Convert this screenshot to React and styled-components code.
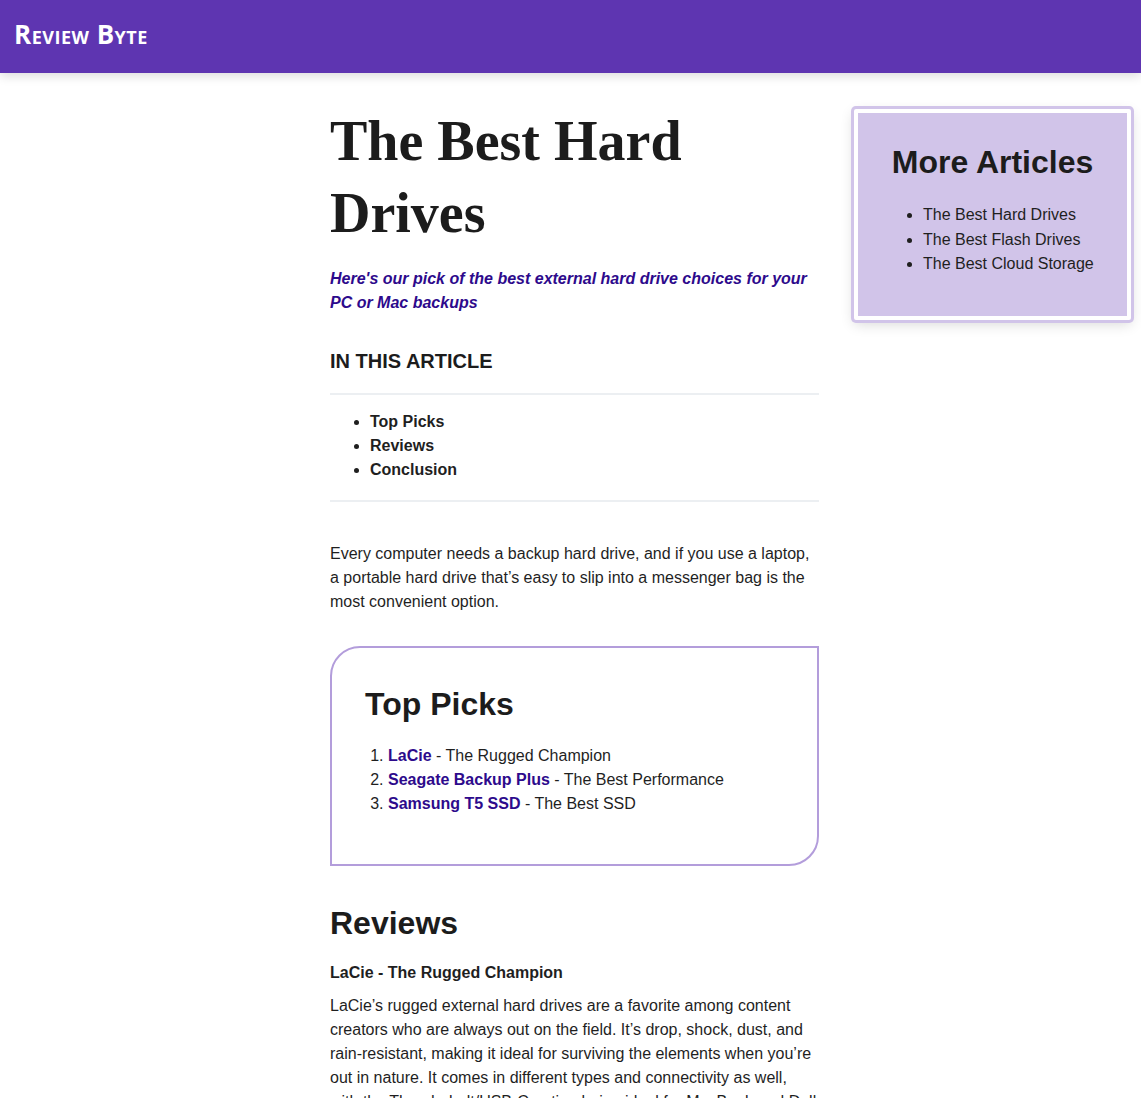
import React from "react";
import styled, { createGlobalStyle } from "styled-components";

const GlobalStyle = createGlobalStyle`
  * { box-sizing: border-box; }
  body {
    margin: 0;
    background: #fff;
    color: #1f1f1f;
    font-family: "Liberation Sans", Arial, sans-serif;
    font-size: 16px;
    line-height: 24px;
  }
`;

const tocItems = ["Top Picks", "Reviews", "Conclusion"];

const picks = [
  { name: "LaCie", tag: "The Rugged Champion" },
  { name: "Seagate Backup Plus", tag: "The Best Performance" },
  { name: "Samsung T5 SSD", tag: "The Best SSD" },
];

const moreArticles = [
  "The Best Hard Drives",
  "The Best Flash Drives",
  "The Best Cloud Storage",
];

function App() {
  return (
    <>
      <GlobalStyle />
      <Header>
        <Logo>Review Byte</Logo>
      </Header>
      <Layout>
        <Article>
          <Title>The Best Hard Drives</Title>
          <Subtitle>
            Here's our pick of the best external hard drive choices for your
            PC or Mac backups
          </Subtitle>

          <TocHeading>IN THIS ARTICLE</TocHeading>
          <Toc>
            <ul>
              {tocItems.map((item) => (
                <li key={item}>{item}</li>
              ))}
            </ul>
          </Toc>

          <Intro>
            Every computer needs a backup hard drive, and if you use a laptop,
            a portable hard drive that’s easy to slip into a messenger bag is
            the most convenient option.
          </Intro>

          <PicksBox>
            <SectionTitle $gap={21}>Top Picks</SectionTitle>
            <PickList>
              {picks.map((p) => (
                <li key={p.name}>
                  <PickLink href="#">{p.name}</PickLink> - {p.tag}
                </li>
              ))}
            </PickList>
          </PicksBox>

          <SectionTitle $gap={19}>Reviews</SectionTitle>
          <ReviewTitle>LaCie - The Rugged Champion</ReviewTitle>
          <Body>
            LaCie’s rugged external hard drives are a favorite among content
            creators who are always out on the field. It’s drop, shock, dust,
            and rain-resistant, making it ideal for surviving the elements
            when you’re out in nature. It comes in different types and
            connectivity as well, with the Thunderbolt/USB-C option being ideal
            for MacBook and Dell XPS users who need fast transfers.
          </Body>
        </Article>

        <Aside>
          <AsideTitle>More Articles</AsideTitle>
          <AsideList>
            {moreArticles.map((a) => (
              <li key={a}>{a}</li>
            ))}
          </AsideList>
        </Aside>
      </Layout>
    </>
  );
}

export default App;

const Header = styled.header`
  height: 73px;
  background: #5e35b1;
  display: flex;
  align-items: center;
  padding: 0 14px;
  box-shadow: 0 3px 10px rgba(0, 0, 0, 0.14);
  position: relative;
  z-index: 1;
`;

const Logo = styled.div`
  color: #fff;
  font-family: "Open Sans", "DejaVu Sans", sans-serif;
  font-variant: small-caps;
  font-weight: 700;
  font-size: 26px;
  letter-spacing: 0.5px;
  margin-top: -5px;
`;

const Layout = styled.div`
  display: grid;
  grid-template-columns: 1fr 489px 1fr;
  align-items: start;
  padding-left: 8px;
`;

const Article = styled.main`
  grid-column: 2;
  padding-top: 32px;
  padding-bottom: 40px;
`;

const Title = styled.h1`
  margin: 0 0 18px;
  font-family: "Liberation Serif", "Times New Roman", serif;
  font-weight: 700;
  font-size: 56px;
  line-height: 72px;
  color: #1c1c1c;
  width: 400px;
`;

const Subtitle = styled.p`
  margin: 0 0 35px;
  color: #2d0a8c;
  font-weight: 700;
  font-style: italic;
`;

const TocHeading = styled.h4`
  margin: 0 0 20px;
  font-size: 20px;
  line-height: 23px;
  font-weight: 700;
  color: #1c1c1c;
`;

const Toc = styled.nav`
  border-top: 2px solid #eceff2;
  border-bottom: 2px solid #eceff2;
  padding: 15px 0 18px;
  font-weight: 700;

  ul {
    margin: 0;
    padding-left: 40px;
  }
`;

const Intro = styled.p`
  margin: 40px 0 32px;
`;

const PicksBox = styled.section`
  border: 2px solid #b39ddb;
  border-radius: 30px 0 30px 0;
  padding: 38px 33px 48px;
  margin-bottom: 39px;
`;

const SectionTitle = styled.h2`
  margin: 0 0 ${(p) => p.$gap || 20}px;
  font-size: 32px;
  line-height: 37px;
  font-weight: 700;
  color: #1c1c1c;
`;

const PickList = styled.ol`
  margin: 0;
  padding-left: 23px;
`;

const PickLink = styled.a`
  color: #2d0a8c;
  font-weight: 700;
  text-decoration: none;
`;

const ReviewTitle = styled.h3`
  margin: 0 0 9px;
  font-size: 16px;
  line-height: 24px;
  font-weight: 700;
`;

const Body = styled.p`
  margin: 0;
`;

const Aside = styled.aside`
  grid-column: 3;
  justify-self: end;
  width: 277px;
  margin: 36px 10px 0 0;
  background: #d1c4e9;
  border: 4px solid #fff;
  border-radius: 2px;
  box-shadow: 0 0 0 3px #d1c4e9, 0 4px 14px rgba(0, 0, 0, 0.16);
  padding: 31px 25px 39px;
`;

const AsideTitle = styled.h2`
  margin: 0 0 22px;
  text-align: center;
  font-size: 32px;
  line-height: 37px;
  font-weight: 700;
  color: #1c1c1c;
`;

const AsideList = styled.ul`
  margin: 0;
  padding-left: 40px;
  line-height: 24.5px;
`;
